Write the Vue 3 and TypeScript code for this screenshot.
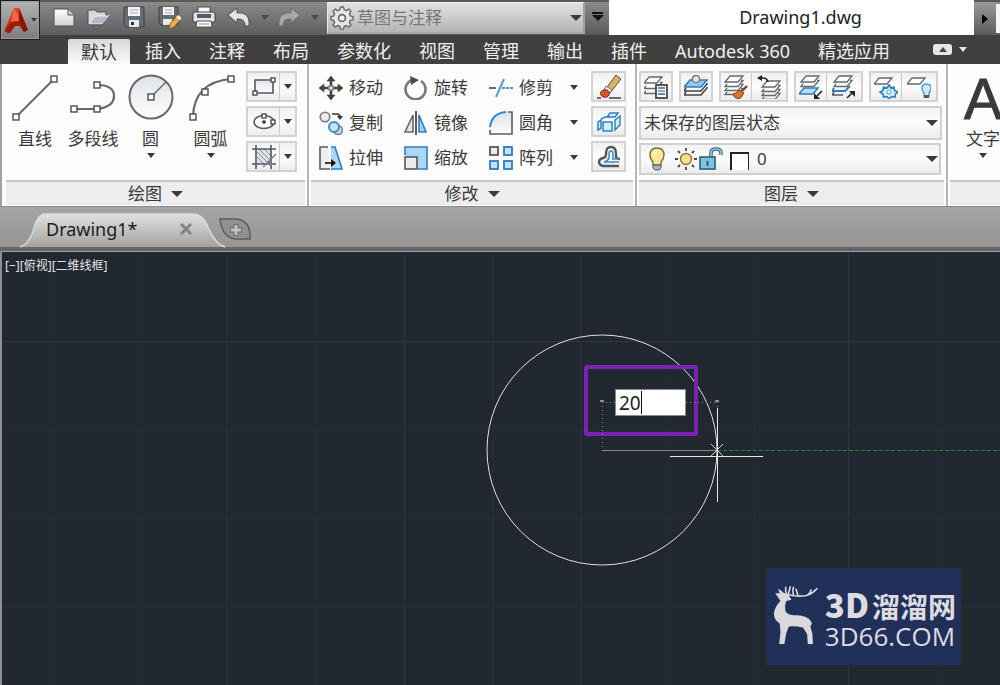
<script setup lang="ts">
import { ref } from 'vue'

interface Tool { label: string; icon: string; menu?: boolean }

const quick: Tool[] = [
  { label: '新建', icon: 'fresh' },
  { label: '打开', icon: 'open' },
  { label: '保存', icon: 'save' },
  { label: '另存为', icon: 'saveAs' },
  { label: '打印', icon: 'print' },
]
const tabs = ['默认', '插入', '注释', '布局', '参数化', '视图', '管理', '输出', '插件', 'Autodesk 360', '精选应用']
const draw: (Tool & { size: string })[] = [
  { label: '直线', icon: 'line', size: 'w-line' },
  { label: '多段线', icon: 'polyline', size: 'w-poly' },
  { label: '圆', icon: 'circle', size: 'w-circle', menu: true },
  { label: '圆弧', icon: 'arc', size: 'w-arc', menu: true },
]
const drawMore: Tool[] = [
  { label: '矩形', icon: 'rect' },
  { label: '椭圆', icon: 'ellipse' },
  { label: '图案填充', icon: 'hatch' },
]
const modify: Tool[] = [
  { label: '移动', icon: 'move' },
  { label: '旋转', icon: 'rotate' },
  { label: '修剪', icon: 'trim', menu: true },
  { label: '复制', icon: 'copy' },
  { label: '镜像', icon: 'mirror' },
  { label: '圆角', icon: 'fillet', menu: true },
  { label: '拉伸', icon: 'stretch' },
  { label: '缩放', icon: 'scale' },
  { label: '阵列', icon: 'array', menu: true },
]
const modifyMore: Tool[] = [
  { label: '删除', icon: 'erase' },
  { label: '分解', icon: 'explode' },
  { label: '偏移', icon: 'offset' },
]
const layerGroups: Tool[][] = [
  [{ label: '图层特性', icon: 'layerProps' }],
  [{ label: '置为当前', icon: 'layerCurrent' }],
  [{ label: '匹配图层', icon: 'layerMatch' }, { label: '上一个', icon: 'layerPrev' }],
  [{ label: '隔离', icon: 'layerIso' }, { label: '取消隔离', icon: 'layerUniso' }],
  [{ label: '冻结', icon: 'layerFreeze' }, { label: '关闭', icon: 'layerOff' }],
]

const sheet = (x: number, y: number, fill = '#fff', stroke = '#66696d') =>
  `<path d="M${x + 5} ${y}h13l-5 6h-13z" fill="${fill}" stroke="${stroke}" stroke-width="1.3"/>`
const edge = (x: number, y: number, stroke = '#66696d') =>
  `<path d="M${x + 2} ${y - 2}l-2 2.500h13l5-6h-2" fill="none" stroke="${stroke}" stroke-width="1.3"/>`
const node = (x: number, y: number, r = 2) =>
  `<rect x="${x - r}" y="${y - r}" width="${r * 2}" height="${r * 2}" fill="#fff" stroke="#4a4c50" stroke-width="1.400"/>`

// Shapes for the 24 x 24 tool icons and the 48 x 48 drawing icons.
const icons: Record<string, string> = {
  fresh: '<path d="M2 4h14l6 6v11H2z" fill="url(#paper)" stroke="#4c4f54"/><path d="M16 4v6h6" fill="#cfd3da" stroke="#4c4f54"/>',
  open: '<path d="M1 19V5h7l2 2h9v4" fill="#d5d8de" stroke="#4c4f54"/><path d="M2 19l6-8h15l-8 8z" fill="#b4bac4" stroke="#eee"/><path d="M1 20h14l8-9" fill="none" stroke="#4c4f54"/>',
  save: '<path d="M2 2h20v20H4l-2-2z" fill="#646b75" stroke="#3d4248"/><path d="M6 2h12v9H6z" fill="#f4f4f4"/><path d="M8 5h8M8 8h8" stroke="#aaa"/><path d="M7 15h10v7H7z" fill="#e8e8e8"/><path d="M9 17h3v3H9z" fill="#333"/>',
  saveAs: '<path d="M2 2h19v18H4l-2-2z" fill="#646b75" stroke="#3d4248"/><path d="M6 2h11v8H6z" fill="#f4f4f4"/><path d="M8 5h7M8 8h7" stroke="#aaa"/><path d="M6 14h9v6H6z" fill="#e8e8e8"/><path d="M13 19l7-8 4 3-7 8-5 2z" fill="#efaf45" stroke="#8a5a1b"/><path d="M19 12l2-2 4 3-2 2z" fill="#f7f1e4"/>',
  print: '<path d="M6 2h12v7H6z" fill="#f8f8f8" stroke="#4c4f54"/><path d="M1 9q0-2 2-2h18q2 0 2 2v8H1z" fill="#e4e6ea" stroke="#3f4247"/><path d="M5 9h14v4H5z" fill="#555c66"/><path d="M5 16h14l1 6H4z" fill="#fff" stroke="#4c4f54"/><path d="M7 19h10" stroke="#888"/>',
  undo: '<path d="M1 10l9-7v5c9-1 13 4 12 13h-4c0-6-3-7-8-7v4z" fill="#dfe2e8" stroke="#464b54" stroke-linejoin="round"/>',
  redo: '<path d="M23 10l-9-7v5C5 7 1 12 2 21h4c0-6 3-7 8-7v4z" fill="#a7a7a7" stroke="#6b6b6b" stroke-linejoin="round"/>',
  gear: '<path d="M10.500 1h3l.8 3 2.200.9 2.700-1.600 2.100 2.200-1.600 2.700.9 2.200 3 .8v3l-3 .7-.9 2.200 1.600 2.700-2.100 2.100-2.700-1.600-2.200.9-.8 2.900h-3l-.7-2.900-2.200-.9-2.700 1.600-2.200-2.100 1.600-2.700-.9-2.200-3-.7v-3l3-.8.9-2.200-1.600-2.700 2.200-2.200 2.700 1.600L9.800 4z" fill="#e7e7ea" stroke="#66686d" stroke-width="1.500"/><circle cx="12" cy="12.500" r="3.600" fill="#f4f4f4" stroke="#66686d" stroke-width="1.800"/>',
  line: '<path d="M5 44L43 6" stroke="#66686b" stroke-width="2"/>' + node(5, 44, 3) + node(43, 6, 3),
  polyline: '<path d="M5 36h23q17-2 17-13T28 12" fill="none" stroke="#66686b" stroke-width="2.200"/>' + node(5, 36, 3) + node(28, 36, 3) + node(28, 12, 3),
  circle: '<circle cx="24" cy="24" r="21.500" fill="url(#disc)" stroke="#66686b" stroke-width="2"/><path d="M24 24L39 9" stroke="#66686b" stroke-width="1.500"/>' + node(24, 24, 3),
  arc: '<path d="M6 44Q7 9 44 6" fill="none" stroke="#66686b" stroke-width="2.200"/>' + node(6, 44, 3) + node(18, 19, 3) + node(44, 6, 3),
  rect: '<path d="M3 5h18v13H3z" fill="url(#disc)" stroke="#55585c" stroke-width="1.600"/>' + node(3, 18) + node(21, 5),
  ellipse: '<ellipse cx="12" cy="12" rx="10" ry="6.500" fill="#fff" stroke="#55585c" stroke-width="1.600"/><path d="M10 12h4M12 10v4" stroke="#333" stroke-width="1.400"/>' + node(12, 6) + node(21, 12),
  hatch: '<path d="M5 4h15v16H5z" fill="#dfe1e8"/><path d="M8 5l12 12M5 7l12 12M13 5l7 7M5 12l7 7" stroke="#8b8e98"/><path d="M4 0v24M19 0v24M0 4h24M0 19h24" stroke="#55585c" stroke-width="1.600"/><path d="M24 9L11 22" stroke="#777b88" stroke-width="1.500"/><path d="M20 13v7h-7z" fill="#777b88"/>',
  move: '<path d="M12 0l4 5h-3v4h-2V5H8zM12 24l-4-5h3v-4h2v4h3zM0 12l5-4v3h4v2H5v3zM24 12l-5 4v-3h-4v-2h4V8z" fill="#3f4145" stroke="#3f4145" stroke-width=".6"/><rect x="10" y="10" width="4" height="4" fill="#fff" stroke="#3f4145"/>',
  rotate: '<path d="M8 4a10 10 0 1 0 9 1" fill="none" stroke="#77797c" stroke-width="2.600"/><path d="M6 0l9 4-8 5z" fill="#4a4c50"/>',
  trim: '<path d="M0 12h7" stroke="#444" stroke-width="1.600"/><path d="M7 21L15 3" stroke="#4d9ed9" stroke-width="2"/><path d="M13 12h11" stroke="#2d6ea8" stroke-width="1.600" stroke-dasharray="3 1"/>',
  copy: '<circle cx="6" cy="6" r="4.800" fill="#e9e9ec" stroke="#77797c" stroke-width="1.600"/><circle cx="19" cy="19" r="4.500" fill="#bcdcf2" stroke="#7a8590" stroke-width="1.600"/><circle cx="15" cy="16" r="5" fill="#c4e3f8" stroke="#3c8dcc" stroke-width="2"/><path d="M13 3h5q3 0 3 3" fill="none" stroke="#333" stroke-width="1.600"/><path d="M18 5h6l-3 4z" fill="#333"/>',
  mirror: '<path d="M9 4v17H1z" fill="#e6e6e9" stroke="#66686b" stroke-width="1.600"/><path d="M15 4v17h7z" fill="#9fd0f2" stroke="#2e7cc0" stroke-width="1.600"/><path d="M12 0v24" stroke="#333" stroke-width="1.600"/>',
  fillet: '<path d="M1 23V17Q3 2 20 1h3v22z" fill="url(#disc)"/><path d="M1 16Q3 2 17 1" fill="none" stroke="#2e8ad0" stroke-width="2"/><path d="M19 1h4v22H1v-4" fill="none" stroke="#5a5c60" stroke-width="1.600"/>',
  stretch: '<path d="M9 1H1v22h10" fill="#eee" stroke="#55585c" stroke-width="1.600"/><path d="M12 1h4l7 22H12" fill="#a9d8f6" stroke="#2e7cc0" stroke-width="1.600"/><path d="M6 17h7" stroke="#111" stroke-width="1.600"/><path d="M12 13l5 4-5 4z" fill="#111"/>',
  scale: '<path d="M1 9V1h22v22h-9" fill="#a9d8f6" stroke="#2e7cc0" stroke-width="1.600"/><rect x="1" y="11" width="12" height="12" fill="#ececef" stroke="#55585c" stroke-width="1.600"/>',
  array: '<rect x="1" y="1" width="8" height="8" fill="#f1e9e6" stroke="#55585c" stroke-width="1.800"/><g fill="#c4e3f8" stroke="#2e7cc0" stroke-width="1.800"><rect x="15" y="1" width="8" height="8"/><rect x="1" y="15" width="8" height="8"/><rect x="15" y="15" width="8" height="8"/></g>',
  erase: '<path d="M8 15L19 0l5 4-11 14z" fill="#d8b46b" stroke="#5d4a2b"/><path d="M9 11l6 4-3 4-5-4z" fill="#eee" stroke="#777"/><ellipse cx="8" cy="18.500" rx="4.500" ry="3.800" fill="#d4532a" stroke="#74301c"/><path d="M0 23h4M12 23h12" stroke="#444" stroke-width="1.600"/>',
  explode: '<g fill="#d6ecfb" stroke="#2e82c4" stroke-width="1.500"><path d="M6 12h9v9H6z"/><path d="M13 3h8l-3 4h-8z"/><path d="M18 10l5-4v9l-5 5z"/><path d="M4 10l-3 2v8l3-2z"/><path d="M4 9l4-2h5"/></g>',
  offset: '<path d="M22 21H6q-4-1-4-4t4-4q3 0 3-4 0-7 5-7t5 7v3q1 2 4 2" fill="none" stroke="#55585c" stroke-width="2.400"/><path d="M22 17H7q4-1 5-4V9q0-3 2-3t2 3v5h6" fill="none" stroke="#3c8dcc" stroke-width="1.600"/>',
  layerProps: sheet(0, 2) + edge(0, 13) + edge(0, 18) + '<rect x="12" y="10" width="11" height="13" fill="#fff" stroke="#44474c" stroke-width="1.800"/><path d="M14 13h7M14 19h7" stroke="#2e62a8" stroke-width="1.600"/><path d="M14 16h7" stroke="#444"/>',
  layerCurrent: '<path d="M6 5h17l-6 7H0z" fill="#8fc8f0" stroke="#2e7cc0" stroke-width="1.500"/><path d="M2 13l-2 3h17l6-7v-1M2 17l-2 3h17l6-7v-1" fill="none" stroke="#44474c" stroke-width="1.600"/><circle cx="12" cy="4" r="3.600" fill="#e7e7ea" stroke="#77797c" stroke-width="1.500"/>',
  layerMatch: sheet(1, 1) + edge(1, 11) + edge(1, 15) + edge(1, 19) + '<path d="M9 19q4-1 6-4l5 3q-3 6-6 6-4-1-5-5z" fill="#d9722b" stroke="#85401a"/><path d="M18 16l5-5" stroke="#85401a" stroke-width="2.400"/>',
  layerPrev: sheet(5, 6) + edge(5, 16) + edge(5, 20) + edge(5, 24) + '<path d="M3 3h3q4 0 5 4" fill="none" stroke="#222" stroke-width="1.600"/><path d="M0 3l5-3v6z" fill="#222"/>',
  layerIso: sheet(2, 1) + edge(2, 11) + '<path d="M5 13h14l-5 6H0z" fill="#b6defa" stroke="#2e7cc0" stroke-width="1.500"/><path d="M23 16l-5 5" stroke="#222" stroke-width="1.600"/><path d="M15 18v6h6z" fill="#222"/>',
  layerUniso: sheet(2, 1) + edge(2, 11) + '<path d="M2 13l-2 3h13l5-5" fill="none" stroke="#2e7cc0" stroke-width="2"/><path d="M2 17l-2 3h11" fill="none" stroke="#55585c" stroke-width="1.500"/><path d="M15 23l6-6" stroke="#222" stroke-width="1.600"/><path d="M17 16h6v6z" fill="#222"/>',
  layerFreeze: sheet(0, 3) + '<path d="M15 10l2 3 3-1 .5 3.500L24 17l-2.500 2-.5 3-3.500-.500L15 24l-2-2.500-3.500.500-.5-3L6 17l3-1.500.5-3.500 3.500 1z" fill="#d6ecfb" stroke="#2e7cc0" stroke-width="1.600"/><circle cx="15" cy="17" r="2" fill="#fff" stroke="#5aa5dc"/>',
  layerOff: sheet(0, 3) + '<path d="M15 13q0-4 4.500-4t4.500 4q0 3-2 5v3h-5v-3q-2-2-2-5z" fill="#cfe8fb" stroke="#4d9ed9" stroke-width="1.500"/><path d="M17 20h5v3h-5z" fill="#55585c"/>',
  bulb: '<path d="M5 8q0-7 7-7t7 7q0 4-3 7v3H8v-3q-3-3-3-7z" fill="#fbe79a" stroke="#7d6c3a" stroke-width="1.400"/><path d="M8 18h8v3l-2 2h-4l-2-2z" fill="#aeb2b8" stroke="#55585c"/><path d="M9 7q1-3 3-3" stroke="#fff" fill="none" stroke-width="1.600"/>',
  sun: '<circle cx="12" cy="12" r="5.500" fill="#fbe08a" stroke="#85734a" stroke-width="1.400"/><path d="M12 1v3M12 20v3M1 12h3M20 12h3M4 4l2 2M18 18l2 2M4 20l2-2M18 6l2-2" stroke="#44474c" stroke-width="1.800"/>',
  lock: '<path d="M12 11V6q0-4 5-4t5 4v2" fill="none" stroke="#3b6f8e" stroke-width="3.600"/><path d="M12 11V6q0-4 5-4t5 4v2" fill="none" stroke="#b9dced" stroke-width="1.200"/><rect x="1" y="10" width="15" height="12" fill="#7fc3e2" stroke="#2a5f7c" stroke-width="1.600"/><path d="M8.500 14v5" stroke="#1f4358" stroke-width="1.600"/>',
}

const workspace = ref('草图与注释')
const layerState = ref('未保存的图层状态')
const layer = ref('0')
const radius = ref('20')
const columns = Array.from({ length: 30 }, (_, i) => ({ x: Math.round(46.500 + i * 88.800), major: i % 5 === 4 }))
const rows = Array.from({ length: 20 }, (_, i) => ({ y: Math.round(i * 88.800), major: i % 5 === 1 }))
</script>

<template>
  <div class="app">
    <svg class="defs" aria-hidden="true">
      <defs>
        <linearGradient id="paper" x2="0" y2="1"><stop stop-color="#fff" /><stop offset="1" stop-color="#cdd0d6" /></linearGradient>
        <linearGradient id="disc" x2="0" y2="1"><stop stop-color="#dfe3ea" /><stop offset="1" stop-color="#fdfdfd" /></linearGradient>
        <linearGradient id="tabFill" x2="0" y2="1"><stop stop-color="#e0e0e0" /><stop offset="1" stop-color="#a2a2a2" /></linearGradient>
        <linearGradient id="brand" x2="0" y2="1"><stop stop-color="#e8462c" /><stop offset="1" stop-color="#b8200f" /></linearGradient>
      </defs>
    </svg>

    <header class="titlebar">
      <button class="app-menu" aria-label="应用程序菜单">
        <svg width="26" height="28" viewBox="0 0 26 28" aria-hidden="true">
          <path d="M11 2L2 23v3l5 1 5-7h5l4 6 4-2-9-22z" fill="url(#brand)" />
          <path d="M11 2L8 16l8-1-1-6z" fill="#f0694f" />
          <path d="M16 2l9 22-4 2-4-6-1-5z" fill="#8f130b" />
          <path d="M8 16l-6 8v2l5 1 5-7h5l-1-5z" fill="#a5190d" />
        </svg>
        <span class="caret small"></span>
      </button>
      <div class="quick">
        <button v-for="t in quick" :key="t.icon" class="bare" :aria-label="t.label">
          <svg class="icon" viewBox="0 0 24 24" v-html="icons[t.icon]"></svg>
        </button>
        <button class="bare history" aria-label="放弃">
          <svg class="icon" viewBox="0 0 24 24" v-html="icons.undo"></svg><span class="caret"></span>
        </button>
        <button class="bare history" aria-label="重做">
          <svg class="icon" viewBox="0 0 24 24" v-html="icons.redo"></svg><span class="caret"></span>
        </button>
      </div>
      <div class="combo workspace">
        <svg class="icon" viewBox="0 0 24 25" v-html="icons.gear"></svg>
        <select v-model="workspace" aria-label="工作空间"><option>草图与注释</option></select>
        <span class="caret large"></span>
      </div>
      <button class="customize" aria-label="自定义快速访问工具栏"><span class="bar"></span><span class="caret large"></span></button>
      <h1 class="title">Drawing1.dwg</h1>
      <button class="expand" aria-label="展开搜索"><span></span></button>
      <div class="search"></div>
    </header>

    <nav class="tabs">
      <button v-for="(t, i) in tabs" :key="t" class="tab" :class="{ active: i === 0 }">{{ t }}</button>
      <button class="minimize" aria-label="最小化功能区"><span class="pill"><span></span></span><span class="caret"></span></button>
    </nav>

    <main class="ribbon">
      <section class="panel p-draw">
        <div class="body">
          <button v-for="t in draw" :key="t.icon" class="big" :class="t.size">
            <svg width="48" height="48" viewBox="0 0 48 48" aria-hidden="true" v-html="icons[t.icon]"></svg>
            <span>{{ t.label }}</span>
            <span v-if="t.menu" class="caret"></span>
          </button>
          <div class="stack">
            <div v-for="t in drawMore" :key="t.icon" class="group">
              <button class="cell" :aria-label="t.label"><svg class="icon" viewBox="0 0 24 24" v-html="icons[t.icon]"></svg></button>
              <button class="cell drop" :aria-label="t.label + '选项'"><span class="caret"></span></button>
            </div>
          </div>
        </div>
        <button class="foot">绘图<span class="caret large"></span></button>
      </section>

      <section class="panel p-modify">
        <div class="body">
          <div class="grid">
            <button v-for="t in modify" :key="t.icon" class="tool">
              <svg class="icon" viewBox="0 0 24 24" v-html="icons[t.icon]"></svg>
              <span>{{ t.label }}</span>
              <span v-if="t.menu" class="caret"></span>
            </button>
          </div>
          <div class="stack">
            <div v-for="t in modifyMore" :key="t.icon" class="group">
              <button class="cell" :aria-label="t.label"><svg class="icon" viewBox="0 0 24 24" v-html="icons[t.icon]"></svg></button>
            </div>
          </div>
        </div>
        <button class="foot">修改<span class="caret large"></span></button>
      </section>

      <section class="panel p-layer">
        <div class="body column">
          <div class="line">
            <div v-for="(g, i) in layerGroups" :key="i" class="group">
              <button v-for="t in g" :key="t.icon" class="cell" :aria-label="t.label"><svg class="icon" viewBox="0 0 24 24" v-html="icons[t.icon]"></svg></button>
            </div>
          </div>
          <div class="combo state">
            <select v-model="layerState" aria-label="图层状态"><option>未保存的图层状态</option></select>
            <span class="caret large"></span>
          </div>
          <div class="combo layer">
            <svg class="icon" viewBox="0 0 24 24" v-html="icons.bulb"></svg>
            <svg class="icon sun" viewBox="0 0 24 24" v-html="icons.sun"></svg>
            <svg class="icon" viewBox="0 0 24 24" v-html="icons.lock"></svg>
            <span class="swatch"></span>
            <select v-model="layer" aria-label="图层"><option>0</option></select>
            <span class="caret large"></span>
          </div>
        </div>
        <button class="foot">图层<span class="caret large"></span></button>
      </section>

      <section class="panel p-note">
        <div class="body">
          <button class="big w-text"><span class="letter">A</span><span>文字</span><span class="caret"></span></button>
        </div>
        <div class="foot"></div>
      </section>
    </main>

    <div class="docs">
      <div class="doc">
        <svg class="shape" width="210" height="36" viewBox="0 0 210 36" aria-hidden="true">
          <path d="M4 35Q12 33 17 20Q21 2 29 2H177Q187 2 192 15Q199 32 209 35" fill="url(#tabFill)" />
          <path d="M4 35Q12 33 17 20Q21 2 29 2H177Q187 2 192 15Q199 32 209 35" fill="none" stroke="#dadada" stroke-width="1.500" />
        </svg>
        <button class="name">Drawing1*</button>
        <button class="close" aria-label="关闭">
          <svg width="12" height="12" viewBox="0 0 12 12"><path d="M1 1l10 10M11 1L1 11" stroke="#858585" stroke-width="3" /></svg>
        </button>
      </div>
      <button class="add" aria-label="新图形">
        <svg width="34" height="24" viewBox="0 0 34 24">
          <path d="M1 2h16q15 1 14 20H16Q3 20 1 2z" fill="#909090" stroke="#5c5c5c" stroke-width="1.600" />
          <path d="M17 7v12M11 13h12" stroke="#6c6c6c" stroke-width="5" /><path d="M17 8v10M12 13h10" stroke="#c4c4c4" stroke-width="3" />
        </svg>
      </button>
    </div>

    <div class="canvas">
      <svg class="scene" aria-hidden="true">
        <g shape-rendering="crispEdges">
          <line v-for="c in columns" :key="'c' + c.x" :x1="c.x" :x2="c.x" y1="0" y2="100%" :class="{ major: c.major }" class="rule" />
          <line v-for="r in rows" :key="'r' + r.y" x1="0" x2="100%" :y1="r.y" :y2="r.y" :class="{ major: r.major }" class="rule" />
        </g>
        <circle cx="600" cy="198" r="115" fill="none" stroke="#dfe1e3" />
        <rect x="584" y="115" width="110" height="67" rx="1" fill="none" stroke="#7b22b5" stroke-width="4" />
        <g shape-rendering="crispEdges">
          <path d="M600 150H715M600 150V198M715 150V158" fill="none" stroke="#8a9096" stroke-dasharray="1 3" />
          <path d="M598 149h4M713 149h4" stroke="#8a9096" stroke-width="2" />
          <path d="M600 198H715" stroke="#858a8e" />
          <line x1="715" x2="100%" y1="198" y2="198" stroke="#2f7a38" stroke-dasharray="4 2" />
          <path d="M668 204H761M715 156V250" stroke="#e6e8ea" />
        </g>
        <path d="M709 192l12 12M721 192l-12 12" stroke="#cfd8d0" />
      </svg>
      <button class="view-label">[−][俯视][二维线框]</button>
      <div class="dynamic"><input v-model="radius" aria-label="半径" /><span class="cursor"></span></div>
      <div class="brand">
        <svg width="48" height="62" viewBox="34 72 144 186" aria-hidden="true">
          <path d="M44 98l14 0-6-14q12 4 16 12l16 6 10 16-16 4q-6 14-2 32 8 12 34 12 34 2 42 16l5 8-5 10 6 22 2 32h-16l-2-30-12-20q-22-6-44-4l-8 20-6 34H56l4-36-2-26q-20-14-18-34 4-20 20-36z" fill="#d9d9dc" />
          <path d="M80 104Q74 92 76 80M84 102L90 78M84 102Q110 110 140 105Q160 98 172 84M100 104Q96 92 100 80M114 106L108 86M140 105Q150 102 154 88" fill="none" stroke="#d9d9dc" stroke-width="5" stroke-linecap="round" />
        </svg>
        <div class="words"><strong><b>3D</b>溜溜网</strong><span>3D66.COM</span></div>
      </div>
    </div>
  </div>
</template>

<style>
html, body { margin: 0; overflow: hidden; background: #212830; }
</style>

<style scoped>
.app {
  display: flex; flex-direction: column; height: 100vh; overflow: hidden;
  font: 17px/24px "Noto Sans", "Noto Sans CJK SC", sans-serif; color: #3a3a3c;
}
.defs { position: absolute; width: 0; height: 0; }
button, select, input { font: inherit; color: inherit; margin: 0; padding: 0; border: 0; background: none; border-radius: 0; }
button { display: flex; align-items: center; justify-content: center; white-space: nowrap; }
.icon { width: 24px; height: 24px; flex: none; }
.caret { flex: none; width: 0; height: 0; border: 4px solid transparent; border-top: 5px solid #3a3a3c; border-bottom: 0; }
.caret.small { border-width: 4px 3px 0; }
.caret.large { border-width: 6px 6px 0; }

.titlebar { display: flex; height: 35px; flex: none; background: linear-gradient(#8a8a8a, #5e5e5e); border-top: 2px solid #5a5a5a; box-sizing: border-box; }
.app-menu {
  position: relative; width: 40px; height: 40px; flex: none; margin-top: -2px; gap: 2px; box-sizing: border-box;
  border: 1px solid #1e1e1e; background: linear-gradient(#b4b4b4, #7c7c7c); box-shadow: inset 0 0 0 1px #9a9a9a;
}
.app-menu svg { width: 26px; flex: none; }
.quick { display: flex; flex: none; align-items: center; gap: 11px; width: 287px; padding: 0 0 3px 12px; box-sizing: border-box; }
.history { gap: 10px; margin-right: -3px; }
.history .caret { border-top-color: #484848; }
.combo { display: flex; align-items: center; box-sizing: border-box; border: 2px solid #d0d0d2; background: linear-gradient(#f2f2f2, #fcfcfc 45%, #ececec); }
.combo select { appearance: none; flex: 1; min-width: 0; height: 26px; }
.workspace { flex: none; width: 258px; margin: 0 1px 1px 0; padding: 0 1px 0 2px; gap: 3px; border-width: 1px 2px 2px 1px; border-color: #f0f0f0 #a0a0a0 #a8a8a8 #e8e8e8; background: linear-gradient(#e2e2e2, #b4b4b4); color: #77777a; }
.customize { flex: none; width: 23px; flex-direction: column; gap: 1px; padding-bottom: 4px; background: linear-gradient(#8a8a8a, #5a5a5a); }
.customize .bar { width: 11px; height: 2px; background: #111; }
.customize .caret { border-top-color: #111; }
.title { flex: 1; margin: -2px 0 0; padding-left: 18px; background: #fff; color: #222; font-size: 18px; font-weight: 400; line-height: 35px; text-align: center; }
.expand { flex: none; width: 22px; background: linear-gradient(#9a9a9a, #5a5a5a); }
.expand span { border: 5px solid transparent; border-left: 6px solid #000; border-right: 0; }
.search { flex: none; width: 4px; margin: 2px 0; background: #f4f4f4; }

.tabs { display: flex; flex: none; height: 29px; padding-left: 66px; background: #404040; color: #f0f0f0; font-size: 18px; }
.tab { padding: 3px 14px 0; }
.tab.active { margin: 4px 1px 0 2px; padding: 0 13px; background: linear-gradient(#d8d8d8, #fafafa); color: #38383a; border-radius: 2px 2px 0 0; }
.minimize { gap: 7px; margin-left: 29px; }
.minimize .caret { border-top-color: #e4e4ea; }
.pill { display: flex; align-items: center; justify-content: center; width: 19px; height: 11px; border-radius: 3px; background: #e4e4ec; }
.pill span { border: 4px solid transparent; border-bottom: 5px solid #444; border-top: 0; }

.ribbon { display: flex; flex: none; height: 143px; box-sizing: border-box; border-left: 2px solid #a0a0a0; border-bottom: 1px solid #8c8c8c; background: #fdfdfd; }
.panel { display: flex; flex: none; flex-direction: column; box-sizing: border-box; border-right: 2px solid #b6b6b8; padding: 0 2px 1px; }
.body { display: flex; flex: 1; padding-top: 7px; }
.column { flex-direction: column; }
.foot { flex: none; height: 25px; box-sizing: border-box; gap: 9px; border-top: 2px solid #c4c4c6; background: #ededed; }
.p-draw { width: 307px; padding-left: 4px; }
.p-modify { width: 328px; }
.p-layer { width: 311px; }
.p-note { width: 80px; }
.big { flex-direction: column; justify-content: flex-start; }
.big span:not(.caret) { line-height: 25px; }
.big svg { margin-top: 2px; }
.big svg + span { margin-top: 5px; }
.big .caret { margin-top: 2px; }
.w-line { width: 58px; }
.w-poly { width: 58px; }
.w-circle { width: 57px; }
.w-arc { width: 63px; }
.stack { display: flex; flex-direction: column; gap: 4px; margin-left: 4px; }
.group { display: flex; width: max-content; height: 31px; box-sizing: border-box; border: 2px solid #d2d2d5; background: linear-gradient(#f0f0f0, #fdfdfd 50%, #ececee); }
.cell { width: 31px; }
.cell + .cell { border-left: 1px solid #cbcbce; box-sizing: content-box; }
.cell.drop { width: 15px; }
.grid { display: grid; grid-template-columns: 85px 85px 97px; grid-auto-rows: 35px; margin-top: -1px; padding-left: 8px; }
.tool { justify-content: flex-start; gap: 6px; }
.tool .caret { margin-left: 11px; }
.p-modify .stack { margin-left: 5px; }
.line { display: flex; gap: 6px; margin-bottom: 4px; }
.line .cell { width: 30px; }
.line .cell + .cell { width: 34px; }
.state { width: 303px; height: 34px; padding: 0 2px 0 3px; margin-bottom: 3px; }
.layer { width: 302px; height: 32px; padding: 0 1px 0 4px; }
.sun { margin: 0 1px 0 5px; }
.swatch { width: 19px; height: 18px; margin: 4px 8px 0 7px; border: solid #222; border-width: 2px 1px 0 2px; box-sizing: border-box; background: #fff; }
.w-text { width: 66px; }
.big .letter:not(.caret) { height: 55px; font: 57px/57px "Liberation Sans", sans-serif; -webkit-text-stroke: 1px #3f4044; }

.docs { display: flex; flex: none; height: 44px; box-sizing: border-box; padding: 5px 0 0 16px; background: linear-gradient(#a4a4a4, #959595); border-bottom: 4px solid #666; }
.doc { position: relative; display: flex; flex: none; width: 203px; height: 35px; }
.shape { position: absolute; left: 0; top: 0; }
.name { position: relative; margin-left: 30px; height: 33px; font-size: 18px; color: #1c1c1c; }
.close { position: relative; margin-left: auto; margin-right: 27px; height: 33px; }
.add { height: 33px; align-items: center; }

.canvas { position: relative; flex: 1; min-height: 0; border-top: 1px solid #9aa0a0; border-left: 2px solid #8b9091; background: #212830; overflow: hidden; }
.scene { position: absolute; inset: 0; width: 100%; height: 100%; }
.rule { stroke: #252d36; }
.rule.major { stroke: #2f3842; }
.view-label { position: absolute; left: 3px; top: 6px; font-size: 12px; line-height: 16px; color: #e4e6e8; }
.dynamic { position: absolute; left: 613px; top: 137px; width: 71px; height: 27px; }
.dynamic input { width: 100%; height: 100%; box-sizing: border-box; padding: 0 3px; border: 1px solid #8a8a8a; background: #fff; color: #222; font-size: 19px; outline: 0; caret-color: transparent; }
.cursor { position: absolute; left: 26px; top: 2px; width: 1px; height: 23px; background: #111; }
.brand { position: absolute; right: 39px; bottom: 20px; display: flex; gap: 5px; width: 195px; height: 97px; padding: 16px 5px 0 6px; box-sizing: border-box; background: #213059; color: #dcdce0; }
.words { display: flex; flex-direction: column; padding-left: 1px; white-space: nowrap; }
.words strong { font: 700 28px/40px "Noto Sans CJK SC", sans-serif; }
.words b { margin-right: 3px; font-size: 33px; line-height: 40px; }
.words span { font: 26px/20px "Open Sans", sans-serif; }
</style>
